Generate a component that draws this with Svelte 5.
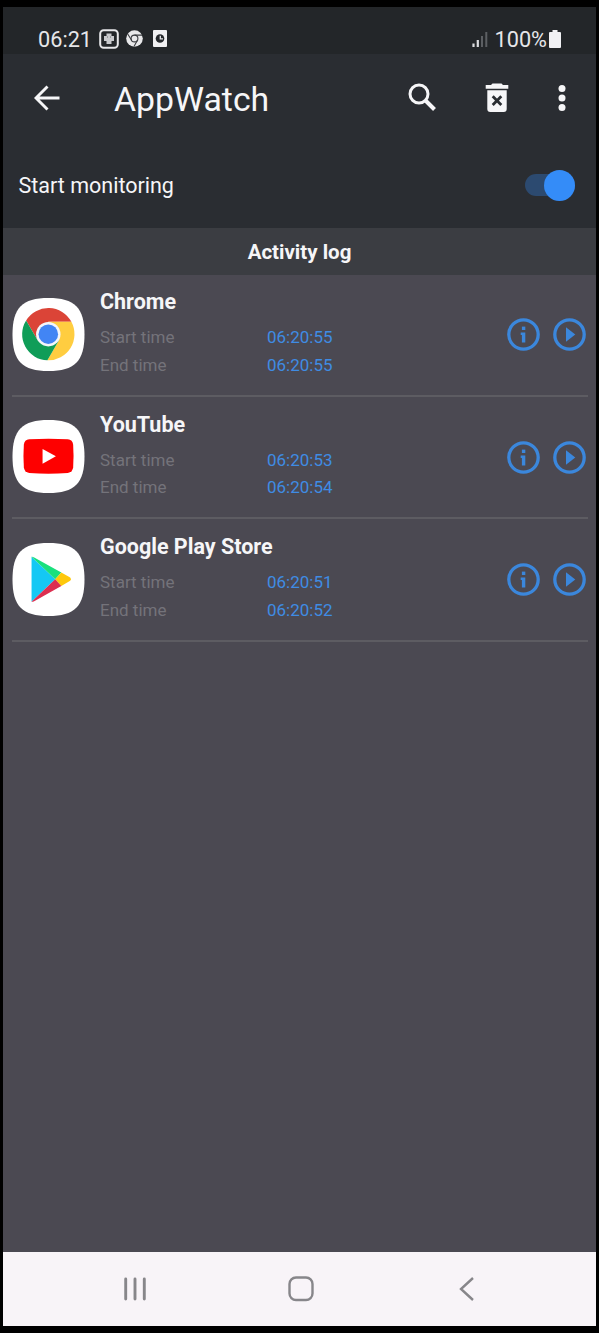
<script lang="ts">
  interface LogEntry {
    id: 'chrome' | 'youtube' | 'play';
    name: string;
    start: string;
    end: string;
  }

  const entries: LogEntry[] = [
    { id: 'chrome', name: 'Chrome', start: '06:20:55', end: '06:20:55' },
    { id: 'youtube', name: 'YouTube', start: '06:20:53', end: '06:20:54' },
    { id: 'play', name: 'Google Play Store', start: '06:20:51', end: '06:20:52' }
  ];

  let monitoring = $state(true);
</script>

<div class="screen">
  <div class="status">
    <span class="clock">06:21</span>
    <svg class="st-app" width="20" height="20" viewBox="0 0 20 20">
      <rect x="1.2" y="1.2" width="17.6" height="17.6" rx="3.5" fill="none" stroke="#e8e8ea" stroke-width="2" />
      <path d="M7.5 4.500h5V7H15v5h-2.500v3h-5v-3H5V7h2.500z" fill="#c9cacd" />
      <path d="M8 8h1M11 8h1" stroke="#6d6f73" />
    </svg>
    <svg class="st-chrome" width="17" height="17" viewBox="0 0 17 17">
      <circle cx="8.500" cy="8.500" r="8.300" fill="#e8e8ea" />
      <circle cx="8.500" cy="8.500" r="3.400" fill="#e8e8ea" stroke="#3a3c40" stroke-width="1.100" />
      <path d="M8.500 5.100H16M11.400 10.200L8 16.500M5.600 10.200L1.700 4" stroke="#3a3c40" stroke-width="1.100" />
    </svg>
    <svg class="st-clock" width="14" height="17" viewBox="0 0 14 17">
      <rect width="14" height="17" rx="1" fill="#f0f0f2" />
      <circle cx="7" cy="8.500" r="4.300" fill="#25282c" />
      <path d="M7.300 5.800V8.800H10" fill="none" stroke="#e8e8ea" stroke-width="1.300" />
    </svg>
    <svg class="st-signal" width="16" height="16" viewBox="0 0 16 16">
      <path d="M1.500 12.500V16M5.800 9V16" stroke="#dcdde0" stroke-width="2.200" />
      <path d="M10 5V16M14.300 1V16" stroke="#5c5f63" stroke-width="2" />
    </svg>
    <span class="percent">100%</span>
    <svg class="st-battery" width="12" height="18" viewBox="0 0 12 18">
      <path d="M3.500 0h5v2H11q1 0 1 1V17q0 1-1 1H1q-1 0-1-1V3Q0 2 1 2h2.500z" fill="#f1f1f4" />
    </svg>
  </div>

  <header class="appbar">
    <button class="back" aria-label="Back">
      <svg width="26" height="26" viewBox="0 0 26 26" fill="none" stroke="#f6f6f8" stroke-width="2.900">
        <path d="M25.500 13H2.500M13.500 1.500L2 13L13.500 24.500" />
      </svg>
    </button>
    <h1>AppWatch</h1>
    <button class="search" aria-label="Search">
      <svg width="29" height="29" viewBox="0 0 29 29" fill="none" stroke="#f6f6f8">
        <circle cx="11" cy="11" r="9" stroke-width="3" />
        <path d="M17.500 17.500L26.500 26.500" stroke-width="4" />
      </svg>
    </button>
    <button class="clear" aria-label="Clear log">
      <svg width="24" height="30" viewBox="0 0 24 30">
        <path d="M7.500 0.500h9l1.500 1.500h5.300v3.800H0.700V2H6z" fill="#f6f6f8" />
        <path d="M2.300 7.300h19.400V26q0 3-3 3H5.300q-3 0-3-3z" fill="#f6f6f8" />
        <path d="M7.700 13.300l8.600 8.600M16.300 13.300l-8.600 8.600" stroke="#2a2d32" stroke-width="2.800" />
      </svg>
    </button>
    <button class="more" aria-label="More options">
      <svg width="8" height="28" viewBox="0 0 8 28" fill="#f6f6f8">
        <circle cx="4" cy="4.500" r="3.500" />
        <circle cx="4" cy="14" r="3.500" />
        <circle cx="4" cy="23.500" r="3.500" />
      </svg>
    </button>
  </header>

  <div class="monitor">
    <span>Start monitoring</span>
    <button
      class="switch"
      class:on={monitoring}
      role="switch"
      aria-checked={monitoring}
      aria-label="Start monitoring"
      onclick={() => (monitoring = !monitoring)}
    >
      <span class="thumb"></span>
    </button>
  </div>

  <h2>Activity log</h2>

  <main>
    {#each entries as entry (entry.id)}
      <article class="row">
        <svg class="app-icon" width="73" height="73" viewBox="0 0 73 74">
          <path d="M36.500 0C63 0 73 10 73 37S63 74 36.500 74S0 64 0 37S10 0 36.500 0z" fill="#fff" />
          {#if entry.id === 'chrome'}
            <g transform="translate(36.300 36.700)">
              <path d="M-22.500 -14A26.500 26.500 0 0 1 23.400 -12.500L0 -12.500L-10.800 6.250z" fill="#db4437" />
              <path d="M23.400 -12.500A26.500 26.500 0 0 1 -0.900 26.500L10.800 6.250L0 -12.500z" fill="#ffcd40" />
              <path d="M-0.900 26.500A26.500 26.500 0 0 1 -22.500 -14L-10.800 6.250L10.800 6.250z" fill="#0f9d58" />
              <circle r="12.400" fill="#f4f6fa" />
              <circle r="9.900" fill="#4285f4" />
            </g>
          {:else if entry.id === 'youtube'}
            <path d="M17 19.500Q36.500 18.300 56 19.500Q61 20 61.500 25Q62.300 37 61.500 48Q61 53 56 53.800Q36.500 55 17 53.800Q12 53 11.500 48Q10.700 37 11.500 25Q12 20 17 19.500z" fill="#fe0000" />
            <path d="M30.500 29.300L44 36.700L30.500 44.300z" fill="#fff" />
          {:else}
            <path d="M19.300 14L43.300 36.700L19.300 59.500z" fill="#14c8f4" />
            <path d="M19.300 14Q20 13.500 22 14.700L49.500 30L43.300 36.700z" fill="#19e07d" />
            <path d="M49.500 30L58.500 35Q60.300 36.700 58.500 38.300L49.500 43.500L43.300 36.700z" fill="#fec80c" />
            <path d="M43.300 36.700L49.500 43.500L22 59Q20 60 19.300 59.500z" fill="#dc2f50" />
          {/if}
        </svg>
        <div class="details">
          <h3>{entry.name}</h3>
          <dl>
            <dt>Start time</dt>
            <dd>{entry.start}</dd>
            <dt>End time</dt>
            <dd>{entry.end}</dd>
          </dl>
        </div>
        <div class="actions">
          <button aria-label="App info">
            <svg width="33" height="33" viewBox="0 0 33 33">
              <circle cx="16.500" cy="16.500" r="14.700" fill="none" stroke="#3b87dc" stroke-width="3.300" />
              <rect x="14.900" y="8.600" width="3.400" height="3.400" fill="#3b87dc" />
              <path d="M13.700 14.500H18.300V24.500H14.900V17h-1.200z" fill="#3b87dc" />
            </svg>
          </button>
          <button aria-label="Open app">
            <svg width="33" height="33" viewBox="0 0 33 33">
              <circle cx="16.500" cy="16.500" r="14.700" fill="none" stroke="#3b87dc" stroke-width="3.300" />
              <path d="M13 9.300L22.300 16.500L13 23.700z" fill="#3b87dc" />
            </svg>
          </button>
        </div>
      </article>
    {/each}
  </main>

  <nav>
    <button aria-label="Recent apps">
      <svg width="24" height="24" viewBox="0 0 24 24" stroke="#87868a" stroke-width="2.900" stroke-linecap="round">
        <path d="M2.700 2V22M12 2V22M21.300 2V22" />
      </svg>
    </button>
    <button class="home" aria-label="Home">
      <svg width="26" height="26" viewBox="0 0 26 26" fill="none" stroke="#87868a" stroke-width="2.400">
        <rect x="1.500" y="1.500" width="23" height="22.500" rx="6.500" />
      </svg>
    </button>
    <button aria-label="Back">
      <svg width="15" height="24" viewBox="0 0 15 24" fill="none" stroke="#87868a" stroke-width="2.400">
        <path d="M14 1L2 12L14 23" />
      </svg>
    </button>
  </nav>
</div>

<style>
  :global(body) {
    background: #000;
  }

  .screen {
    box-sizing: border-box;
    display: flex;
    flex-direction: column;
    width: 599px;
    height: 1333px;
    padding: 7px 3px;
    background: #000;
    color: #f6f6f8;
    font-family: Roboto, 'Liberation Sans', sans-serif;
  }

  button {
    display: flex;
    padding: 0;
    border: 0;
    background: none;
    cursor: pointer;
  }

  svg {
    display: block;
    flex: none;
  }

  h1, h2, h3, dl, dd {
    margin: 0;
  }

  .status {
    display: flex;
    align-items: center;
    box-sizing: border-box;
    height: 47px;
    padding: 16px 35px 0;
    background: #232629;
    color: #e6e6e9;
    font-size: 21.7px;
  }

  .clock,
  .percent {
    padding-top: 2px;
  }

  .clock { width: 61px; }
  .st-chrome { margin-left: 7px; }
  .st-clock { margin-left: 10px; }
  .st-signal { margin-left: auto; }
  .percent { margin-left: 7px; }
  .st-battery { margin-left: 2px; }

  .appbar {
    display: flex;
    align-items: center;
    box-sizing: border-box;
    height: 88px;
    padding: 0 30px 0 31px;
    background: #2a2d32;
  }

  .appbar h1 {
    margin: 2px auto 0 54px;
    font-size: 33.800px;
    font-weight: 400;
  }

  .search,
  .clear {
    margin-top: -1px;
  }

  .clear { margin-left: 48px; }
  .more { margin-left: 49px; }

  .monitor {
    display: flex;
    align-items: center;
    justify-content: space-between;
    box-sizing: border-box;
    height: 86px;
    padding: 0 21px 0 15.500px;
    background: #2a2d32;
    font-size: 21.500px;
  }

  .switch {
    align-items: center;
    width: 50px;
    height: 22px;
    border-radius: 11px;
    background: #53565b;
  }

  .switch.on {
    justify-content: flex-end;
    background: #2c4a70;
  }

  .thumb {
    width: 31px;
    height: 31px;
    flex: none;
    border-radius: 50%;
    background: #348cf8;
  }

  h2 {
    height: 47px;
    background: #3b3d42;
    font-size: 20.500px;
    line-height: 48px;
    text-align: center;
  }

  main {
    flex: 1;
    padding: 0 8px 0 8.500px;
    background: #4b4952;
  }

  .row {
    display: flex;
    box-sizing: border-box;
    height: 122.600px;
    border-bottom: 2px solid #5d5c62;
  }

  .row:first-child {
    height: 121.600px;
  }

  /* later rows start one pixel higher than the first */
  .row:not(:first-child) {
    padding-top: 1px;
  }

  .app-icon { margin-top: 22.500px; }

  .details {
    flex: 1;
    padding: 14px 0 0 15.500px;
  }

  h3 {
    font-size: 21.500px;
    line-height: 26px;
  }

  dl {
    display: grid;
    grid-template-columns: 167px 1fr;
    margin-top: 9px;
    font-size: 17px;
    line-height: 27.500px;
  }

  dt { color: #74737a; }
  dd { color: #3f8ce4; }

  .actions {
    display: flex;
    align-items: flex-start;
    gap: 13px;
    padding: 43px 2.500px 0 0;
  }

  nav {
    display: flex;
    align-items: center;
    justify-content: space-between;
    box-sizing: border-box;
    height: 74px;
    padding: 0 122px 0 119.500px;
    background: #f8f4f8;
  }

  .home { margin-right: 3px; }
</style>
